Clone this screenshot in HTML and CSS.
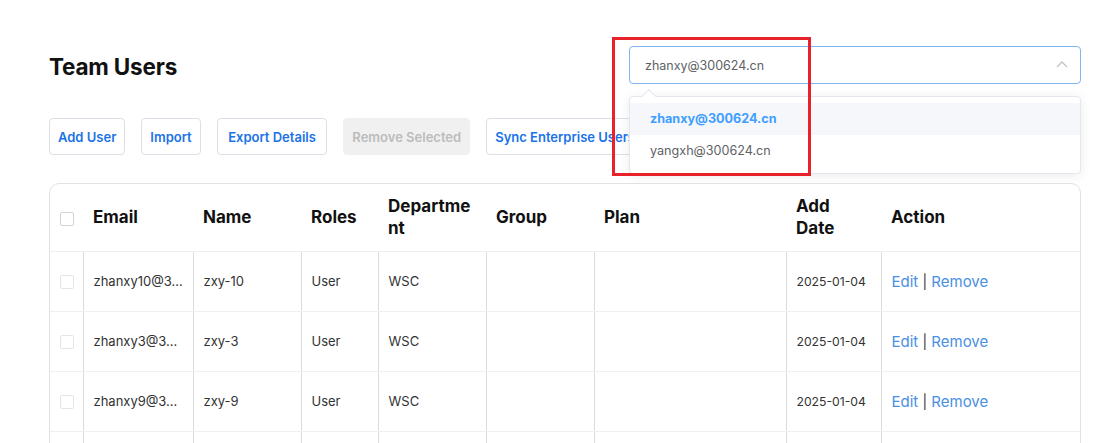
FILE: index.html
```html
<!DOCTYPE html>
<html lang="en">
<head>
<meta charset="utf-8">
<title>Team Users</title>
<link rel="stylesheet" href="styles.css">
</head>
<body>
<div class="page">
  <div class="topbar">
    <h1 class="title">Team Users</h1>
    <div class="select-wrap">
      <div class="select">
        <span class="select-value">zhanxy@300624.cn</span>
        <svg class="chev" width="12" height="8" viewBox="0 0 12 8"><path d="M1 7 L6 2 L11 7" fill="none" stroke="#c0c4cc" stroke-width="1.3"/></svg>
      </div>
      <div class="dropdown">
        <div class="arrow"></div>
        <div class="opt selected">zhanxy@300624.cn</div>
        <div class="opt">yangxh@300624.cn</div>
      </div>
    </div>
  </div>
  <div class="toolbar">
    <button class="btn">Add User</button>
    <button class="btn">Import</button>
    <button class="btn btn-wide">Export Details</button>
    <button class="btn disabled">Remove Selected</button>
    <button class="btn">Sync Enterprise Users</button>
  </div>
  <div class="table-wrap">
    <table class="grid">
      <colgroup>
        <col class="c-cb"><col class="c-email"><col class="c-name"><col class="c-roles"><col class="c-dept"><col class="c-group"><col class="c-plan"><col class="c-date"><col class="c-action">
      </colgroup>
      <thead>
        <tr>
          <th class="cb-cell"><span class="cb"></span></th>
          <th>Email</th><th>Name</th><th>Roles</th><th class="brk">Department</th><th>Group</th><th>Plan</th><th>Add Date</th><th>Action</th>
        </tr>
      </thead>
      <tbody>
        <tr>
          <td class="cb-cell"><span class="cb light"></span></td>
          <td>zhanxy10@3...</td><td>zxy-10</td><td>User</td><td>WSC</td><td></td><td></td><td class="date">2025-01-04</td>
          <td class="act"><a>Edit</a> <span class="sep">|</span> <a>Remove</a></td>
        </tr>
        <tr>
          <td class="cb-cell"><span class="cb light"></span></td>
          <td>zhanxy3@3...</td><td>zxy-3</td><td>User</td><td>WSC</td><td></td><td></td><td class="date">2025-01-04</td>
          <td class="act"><a>Edit</a> <span class="sep">|</span> <a>Remove</a></td>
        </tr>
        <tr>
          <td class="cb-cell"><span class="cb light"></span></td>
          <td>zhanxy9@3...</td><td>zxy-9</td><td>User</td><td>WSC</td><td></td><td></td><td class="date">2025-01-04</td>
          <td class="act"><a>Edit</a> <span class="sep">|</span> <a>Remove</a></td>
        </tr>
        <tr>
          <td class="cb-cell"></td>
          <td></td><td></td><td></td><td></td><td></td><td></td><td></td><td></td>
        </tr>
      </tbody>
    </table>
  </div>
  <div class="annot"></div>
</div>
</body>
</html>
```
FILE: styles.css
```css
* { box-sizing: border-box; }
html, body { margin: 0; padding: 0; background: #fff; }
body { font-family: Inter, "Noto Sans", sans-serif; color: #333; overflow: hidden; height: 443px; }
.page { position: relative; padding: 46px 25px 0 49px; width: 1106px; }
.topbar { display: flex; align-items: center; justify-content: space-between; height: 38px; }
.title { margin: 2px 0 0; font-size: 22.5px; font-weight: 700; color: #111; letter-spacing: -0.2px; }
.select-wrap { position: relative; width: 452px; }
.select { height: 38px; border: 1px solid #7fb5f0; border-radius: 4px; display: flex; align-items: center; justify-content: space-between; padding: 0 12px 0 15px; background: #fff; }
.select-value { font-size: 12.5px; color: #606266; }
.chev { margin-top: -2px; }
.dropdown { position: absolute; left: 0; top: 50px; width: 452px; background: #fff; border: 1px solid #e4e7ed; border-radius: 4px; box-shadow: 0 2px 12px rgba(0,0,0,0.08); padding: 6px 0; z-index: 5; }
.arrow { position: absolute; top: -6px; left: 14px; width: 10px; height: 10px; background: #fff; border-left: 1px solid #e4e7ed; border-top: 1px solid #e4e7ed; transform: rotate(45deg); }
.opt { height: 32px; line-height: 32px; padding-left: 20px; font-size: 12.6px; color: #606266; }
.opt.selected { background: #f5f7fa; color: #409eff; font-weight: 700; position: relative; }
.toolbar { display: flex; gap: 16px; margin-top: 34px; }
.btn { height: 37px; padding: 0 8px; border: 1px solid #dcdfe6; border-radius: 4px; background: #fff; font-family: Inter, "Noto Sans", sans-serif; font-size: 13px; font-weight: 600; color: #1a73e8; white-space: nowrap; }
.btn.btn-wide { padding: 0 10.5px; }
.btn.disabled { background: #f0f0f0; border-color: #f0f0f0; color: #bcbcbc; }
.table-wrap { margin-top: 28px; width: 1032px; border: 1px solid #e2e2e2; border-radius: 10px; overflow: hidden; }
.grid { width: 100%; border-collapse: collapse; table-layout: fixed; }
.c-cb { width: 33px; } .c-email { width: 110px; } .c-name { width: 108px; } .c-roles { width: 77px; }
.c-dept { width: 108px; } .c-group { width: 108px; } .c-plan { width: 192px; } .c-date { width: 95px; } .c-action { width: auto; }
th { height: 67px; text-align: left; font-size: 17px; font-weight: 700; color: #111; padding: 0 10px; line-height: 22px; border-bottom: 1px solid #efefef; }
th.brk { word-break: break-all; }
td { height: 60px; font-size: 13px; color: #333; padding: 0 10px; border-bottom: 1px solid #f0f0f0; border-left: 1px solid #dcdcdc; white-space: nowrap; overflow: hidden; }
td.cb-cell, th.cb-cell { border-left: none; padding: 0 0 0 10px; }
td.date { font-size: 12.2px; }
.cb { display: inline-block; width: 14px; height: 14px; border: 1px solid #cfd3da; border-radius: 2px; vertical-align: middle; background: #fff; }
.cb.light { border-color: #e6e6e6; }
.act { font-size: 15px; color: #4a90e2; }
.act a { color: #4a90e2; }
.sep { color: #333; font-size: 14px; }
.annot { position: absolute; left: 612px; top: 37px; width: 199px; height: 139px; border: 3px solid #e8222a; z-index: 10; pointer-events: none; }
```
